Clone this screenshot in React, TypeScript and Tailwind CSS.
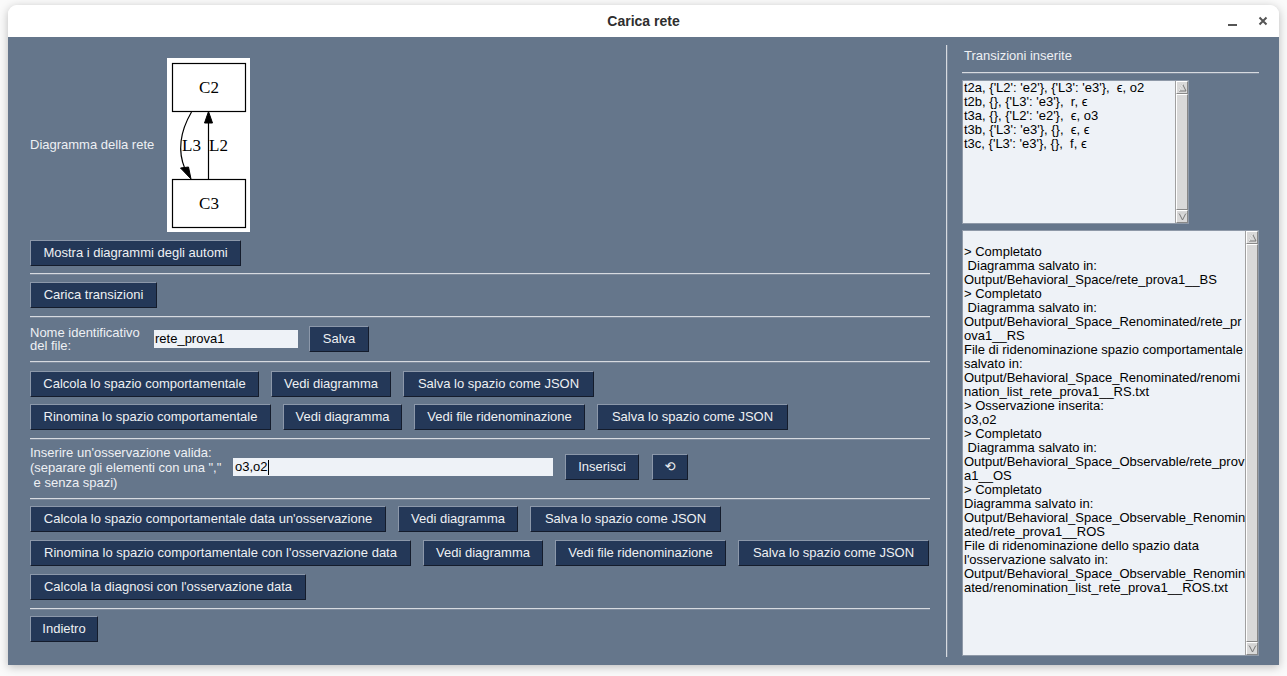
import React from "react";

const FONT = "font-['Liberation_Sans','DejaVu_Sans',sans-serif]";

const TRANSIZIONI = [
  "t2a, {'L2': 'e2'}, {'L3': 'e3'},  ϵ, o2",
  "t2b, {}, {'L3': 'e3'},  r, ϵ",
  "t3a, {}, {'L2': 'e2'},  ϵ, o3",
  "t3b, {'L3': 'e3'}, {},  ϵ, ϵ",
  "t3c, {'L3': 'e3'}, {},  f, ϵ",
];

const LOG = [
  "",
  "> Completato",
  " Diagramma salvato in:",
  "Output/Behavioral_Space/rete_prova1__BS",
  "> Completato",
  " Diagramma salvato in:",
  "Output/Behavioral_Space_Renominated/rete_pr",
  "ova1__RS",
  "File di ridenominazione spazio comportamentale",
  "salvato in:",
  "Output/Behavioral_Space_Renominated/renomi",
  "nation_list_rete_prova1__RS.txt",
  "> Osservazione inserita:",
  "o3,o2",
  "> Completato",
  " Diagramma salvato in:",
  "Output/Behavioral_Space_Observable/rete_prov",
  "a1__OS",
  "> Completato",
  "Diagramma salvato in:",
  "Output/Behavioral_Space_Observable_Renomin",
  "ated/rete_prova1__ROS",
  "File di ridenominazione dello spazio data",
  "l'osservazione salvato in:",
  "Output/Behavioral_Space_Observable_Renomin",
  "ated/renomination_list_rete_prova1__ROS.txt",
];

function Btn({ label, w }: { label: string; w: string }) {
  return (
    <button
      className={`${w} h-[26px] shrink-0 bg-[#243858] text-[#eef0f3] text-[13px] leading-none pb-[2px] border border-t-[#8c98aa] border-l-[#8c98aa] border-b-[#141c2c] border-r-[#141c2c] flex items-center justify-center whitespace-nowrap`}
    >
      {label}
    </button>
  );
}

function Sep({ mt }: { mt: string }) {
  return <div className={`${mt} w-[900px] h-[2px] border-t border-[#d6dae0] border-b-[#7d8a9c] border-b`} />;
}

function Scrollbar() {
  return (
    <div className="w-[13px] h-full bg-[#d9d9d9] flex flex-col border-l border-[#a0a0a0]">
      <div className="h-[13px] flex items-center justify-center border border-t-white border-l-white border-b-[#888] border-r-[#888]">
        <svg width="9" height="9" viewBox="0 0 9 9">
          <path d="M4.5 1 L8 8 L1 8 Z" fill="#d9d9d9" stroke="#777" strokeWidth="1" />
          <path d="M4.5 1 L1 8" stroke="#fff" strokeWidth="1" />
        </svg>
      </div>
      <div className="flex-1 border border-t-white border-l-white border-b-[#888] border-r-[#888] bg-[#d9d9d9]" />
      <div className="h-[13px] flex items-center justify-center border border-t-white border-l-white border-b-[#888] border-r-[#888]">
        <svg width="9" height="9" viewBox="0 0 9 9">
          <path d="M1 1 L8 1 L4.5 8 Z" fill="#d9d9d9" stroke="#777" strokeWidth="1" />
          <path d="M1 1 L8 1" stroke="#fff" strokeWidth="1" />
        </svg>
      </div>
    </div>
  );
}

function Diagramma() {
  return (
    <svg width="83" height="174" viewBox="0 0 83 174" className="bg-white block">
      <rect x="5.5" y="5.5" width="73" height="48" fill="white" stroke="black" strokeWidth="1.2" />
      <text x="42" y="35" textAnchor="middle" fontFamily="Liberation Serif, serif" fontSize="17">C2</text>
      <rect x="5.5" y="121.5" width="73" height="48" fill="white" stroke="black" strokeWidth="1.2" />
      <text x="42" y="151" textAnchor="middle" fontFamily="Liberation Serif, serif" fontSize="17">C3</text>
      {/* L2: C3 -> C2 */}
      <line x1="41.5" y1="121" x2="41.5" y2="65" stroke="black" strokeWidth="1.2" />
      <path d="M37.5 65 L45.5 65 L41.5 53.5 Z" fill="black" stroke="black" />
      {/* L3: C2 -> C3 */}
      <path d="M24.5 54 C 14 72, 10 92, 18 111" fill="none" stroke="black" strokeWidth="1.2" />
      <path d="M13.5 110 L21.5 109 L24 121 Z" fill="black" stroke="black" />
      <text x="24.5" y="93" textAnchor="middle" fontFamily="Liberation Serif, serif" fontSize="17">L3</text>
      <text x="51.5" y="93" textAnchor="middle" fontFamily="Liberation Serif, serif" fontSize="17">L2</text>
    </svg>
  );
}

export default function App() {
  return (
    <div className={`w-[1287px] h-[676px] bg-[#fafafa] overflow-hidden ${FONT}`}>
      <div className="ml-[8px] mt-[5px] w-[1271px] rounded-t-[9px] shadow-[0_2px_10px_rgba(0,0,0,0.25)] overflow-hidden">
        {/* Title bar */}
        <div className="h-[32px] bg-white relative flex items-center justify-center">
          <span className="text-[14px] font-bold text-[#2e2e2e]">Carica rete</span>
          <div className="absolute right-[11px] top-0 h-full flex items-center gap-[21px] text-[#555]">
            <div className="w-[9px] h-[2px] bg-[#555] mt-[8px]" />
            <svg width="10" height="10" viewBox="0 0 10 10">
              <path d="M1.5 1.5 L8.5 8.5 M8.5 1.5 L1.5 8.5" stroke="#555" strokeWidth="2" />
            </svg>
          </div>
        </div>

        {/* Content */}
        <div className="h-[628px] bg-[#65768b] flex text-[13px] text-[#eef0f4]">
          {/* Left column */}
          <div className="ml-[22px] w-[900px] flex flex-col">
            <div className="mt-[21px] h-[174px] flex items-center">
              <span className="w-[137px]">Diagramma della rete</span>
              <Diagramma />
            </div>
            <div className="mt-[8px]">
              <Btn label="Mostra i diagrammi degli automi" w="w-[211px]" />
            </div>
            <Sep mt="mt-[7px]" />
            <div className="mt-[7px]">
              <Btn label="Carica transizioni" w="w-[127px]" />
            </div>
            <Sep mt="mt-[8px]" />
            <div className="mt-[8px] h-[26px] flex items-center">
              <span className="w-[124px] leading-[13px]">
                Nome identificativo
                <br />
                del file:
              </span>
              <div className="w-[144px] h-[18px] bg-[#eef2f7] text-black pl-[1px] leading-[18px]">rete_prova1</div>
              <div className="ml-[11px]">
                <Btn label="Salva" w="w-[60px]" />
              </div>
            </div>
            <Sep mt="mt-[9px]" />
            <div className="mt-[8px] flex gap-[12px]">
              <Btn label="Calcola lo spazio comportamentale" w="w-[229px]" />
              <Btn label="Vedi diagramma" w="w-[120px]" />
              <Btn label="Salva lo spazio come JSON" w="w-[191px]" />
            </div>
            <div className="mt-[7px] flex gap-[12px]">
              <Btn label="Rinomina lo spazio comportamentale" w="w-[241px]" />
              <Btn label="Vedi diagramma" w="w-[119px]" />
              <Btn label="Vedi file ridenominazione" w="w-[171px]" />
              <Btn label="Salva lo spazio come JSON" w="w-[191px]" />
            </div>
            <Sep mt="mt-[8px]" />
            <div className="mt-[4px] h-[46px] flex items-center">
              <span className="w-[203px] leading-[15px] whitespace-pre">
                {"Inserire un'osservazione valida:\n(separare gli elementi con una \",\"\n e senza spazi)"}
              </span>
              <div className="w-[320px] h-[18px] bg-[#eef2f7] text-black pl-[2px] leading-[18px] flex items-center">
                o3,o2<span className="w-[1px] h-[15px] bg-black" />
              </div>
              <div className="ml-[12px]">
                <Btn label="Inserisci" w="w-[74px]" />
              </div>
              <div className="ml-[13px]">
                <Btn label="⟲" w="w-[36px]" />
              </div>
            </div>
            <Sep mt="mt-[8px]" />
            <div className="mt-[6px] flex gap-[12px]">
              <Btn label="Calcola lo spazio comportamentale data un'osservazione" w="w-[356px]" />
              <Btn label="Vedi diagramma" w="w-[120px]" />
              <Btn label="Salva lo spazio come JSON" w="w-[191px]" />
            </div>
            <div className="mt-[8px] flex gap-[12px]">
              <Btn label="Rinomina lo spazio comportamentale con l'osservazione data" w="w-[381px]" />
              <Btn label="Vedi diagramma" w="w-[120px]" />
              <Btn label="Vedi file ridenominazione" w="w-[171px]" />
              <Btn label="Salva lo spazio come JSON" w="w-[191px]" />
            </div>
            <div className="mt-[8px] flex">
              <Btn label="Calcola la diagnosi con l'osservazione data" w="w-[276px]" />
            </div>
            <Sep mt="mt-[8px]" />
            <div className="mt-[6px]">
              <Btn label="Indietro" w="w-[68px]" />
            </div>
          </div>

          {/* Vertical separator */}
          <div className="ml-[16px] mt-[8px] h-[612px] w-[2px] border-l border-[#d6dae0] border-r border-r-[#7d8a9c]" />

          {/* Right column */}
          <div className="ml-[14px] w-[297px] flex flex-col">
            <div className="mt-[11px] pl-[2px] h-[16px] leading-[16px]">Transizioni inserite</div>
            <div className="mt-[8px] h-[2px] border-t border-[#d6dae0] border-b border-b-[#7d8a9c]" />
            <div className="mt-[6px] w-[227px] h-[144px] flex border border-[#8e99a8] bg-[#eef2f7]">
              <div className="flex-1 text-black leading-[14px] whitespace-pre pl-[1px] overflow-hidden">
                {TRANSIZIONI.map((t, i) => (
                  <div key={i}>{t}</div>
                ))}
              </div>
              <Scrollbar />
            </div>
            <div className="mt-[6px] w-[297px] h-[426px] flex border border-[#8e99a8] bg-[#eef2f7]">
              <div className="flex-1 text-black leading-[14px] whitespace-pre pl-[1px] overflow-hidden">
                {LOG.map((t, i) => (
                  <div key={i} className="h-[14px]">{t}</div>
                ))}
              </div>
              <Scrollbar />
            </div>
          </div>
        </div>
      </div>
    </div>
  );
}
